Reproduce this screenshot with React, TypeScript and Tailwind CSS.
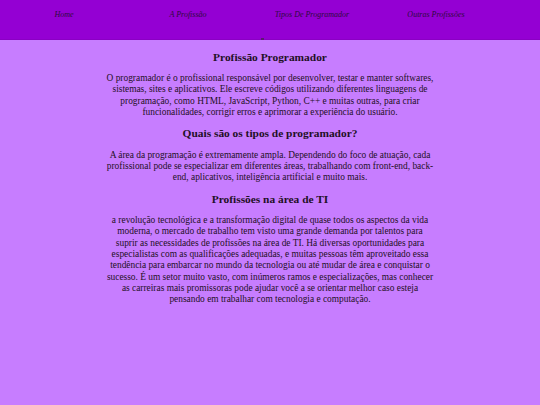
export default function App() {
  const serif = { fontFamily: '"Liberation Serif", "Times New Roman", serif' };
  return (
    <div className="min-h-[405px] bg-[#c77dff] text-[#1f1026]" style={serif}>
      <header className="relative h-[40px] bg-[#9400d3] border-b border-[#8a00c4]">
        <nav className="grid grid-cols-4 w-[496px] ml-[2px] pt-[9px]">
          <a className="text-center text-[8px] italic text-[#2d0a3d]">Home</a>
          <a className="text-center text-[8px] italic text-[#2d0a3d]">A Profissão</a>
          <a className="text-center text-[8px] italic text-[#2d0a3d]">Tipos De Programador</a>
          <a className="text-center text-[8px] italic text-[#2d0a3d]">Outras Profissões</a>
        </nav>
        <span className="absolute left-[261px] top-[38px] w-[3px] h-[2px] bg-[#5a1a70]"></span>
      </header>
      <main className="w-[328px] mx-auto pt-[11px] text-center">
        <h1 className="text-[11.4px] leading-[13px] font-bold">Profissão Programador</h1>
        <p className="mt-[9px] text-[9.4px] leading-[11.3px]">
          O programador é o profissional responsável por desenvolver, testar e manter softwares, sistemas, sites e aplicativos. Ele escreve códigos utilizando diferentes linguagens de programação, como HTML, JavaScript, Python, C++ e muitas outras, para criar funcionalidades, corrigir erros e aprimorar a experiência do usuário.
        </p>
        <h2 className="mt-[8.5px] text-[11.4px] leading-[13px] font-bold">Quais são os tipos de programador?</h2>
        <p className="mt-[10px] text-[9.4px] leading-[11.3px]">
          A área da programação é extremamente ampla. Dependendo do foco de atuação, cada profissional pode se especializar em diferentes áreas, trabalhando com front-end, back-end, aplicativos, inteligência artificial e muito mais.
        </p>
        <h2 className="mt-[9.5px] text-[11.4px] leading-[13px] font-bold">Profissões na área de TI</h2>
        <p className="mt-[9px] text-[9.4px] leading-[11.3px]">
          a revolução tecnológica e a transformação digital de quase todos os aspectos da vida moderna, o mercado de trabalho tem visto uma grande demanda por talentos para suprir as necessidades de profissões na área de TI. Há diversas oportunidades para especialistas com as qualificações adequadas, e muitas pessoas têm aproveitado essa tendência para embarcar no mundo da tecnologia ou até mudar de área e conquistar o sucesso. É um setor muito vasto, com inúmeros ramos e especializações, mas conhecer as carreiras mais promissoras pode ajudar você a se orientar melhor caso esteja pensando em trabalhar com tecnologia e computação.
        </p>
      </main>
    </div>
  );
}
